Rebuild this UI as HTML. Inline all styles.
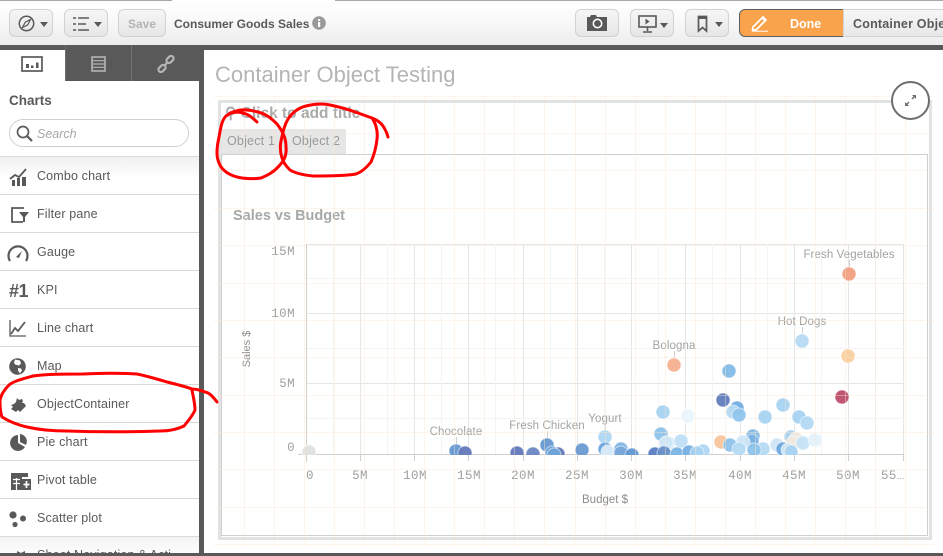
<!DOCTYPE html>
<html><head><meta charset="utf-8"><style>
html,body{margin:0;padding:0;background:#fff}
#p{position:relative;width:943px;height:556px;overflow:hidden;background:#fff;font-family:"Liberation Sans",sans-serif}
#p div,#p span.a{position:absolute;box-sizing:border-box}
.btn{top:9px;height:28px;border:1px solid #d2d2d2;border-radius:6px;background:linear-gradient(#f6f6f6,#e6e6e6)}
.caret{position:absolute;width:0;height:0;border-left:4px solid transparent;border-right:4px solid transparent;border-top:5px solid #595959}
.sep{left:0;width:199px;height:1px;background:#d9d9d9}
.it{left:37px;font-size:12.5px;color:#595959;line-height:14px;white-space:nowrap;letter-spacing:.15px}
.yl,.xl{font-family:"Liberation Mono",monospace;font-size:12.5px;color:#a0a0a0;line-height:14px;white-space:nowrap;letter-spacing:.4px}
.yl{right:648px;text-align:right}
.xl{width:50px;text-align:center;top:469px}
.lb{font-size:11.5px;color:#a3a3a3;line-height:14px;white-space:nowrap;width:120px;text-align:center;letter-spacing:.1px}
svg{position:absolute;overflow:visible}
</style></head><body><div id="p">

<div style="left:0;top:0;width:943px;height:45px;background:linear-gradient(#fff,#fafafa 40%,#ececec)"></div>
<div style="left:0;top:0;width:172px;height:1px;background:#a8a8a8"></div>
<div style="left:335px;top:0;width:608px;height:1px;background:#a8a8a8"></div>

<div class="btn" style="left:9px;width:44px">
<svg style="left:8px;top:5px" width="17" height="17" viewBox="0 0 17 17"><circle cx="8.5" cy="8.5" r="7.2" fill="none" stroke="#595959" stroke-width="1.5"/><path d="M12.5 4.5L9.8 9.8 4.5 12.5 7.2 7.2Z" fill="none" stroke="#595959" stroke-width="1.2"/></svg>
<span class="caret" style="left:30px;top:12px"></span></div>
<div class="btn" style="left:64px;width:44px">
<svg style="left:8px;top:7px" width="17" height="14" viewBox="0 0 17 14"><path d="M0 1h3M5 1h11M0 7h3M5 7h8M0 13h3M5 13h11" stroke="#595959" stroke-width="1.6" fill="none"/></svg>
<span class="caret" style="left:29px;top:12px"></span></div>
<div class="btn" style="left:118px;width:48px;text-align:center;font-size:12px;font-weight:bold;color:#b4b4b4;line-height:28px">Save</div>
<div style="left:174px;top:17px;font-size:12px;font-weight:bold;color:#595959;line-height:15px;white-space:nowrap">Consumer Goods Sales</div>
<svg style="left:312px;top:16px" width="14" height="14" viewBox="0 0 14 14"><circle cx="7" cy="7" r="6.8" fill="#999"/><rect x="6" y="6" width="2.2" height="5" fill="#fff"/><rect x="6" y="3" width="2.2" height="2" fill="#fff"/></svg>

<div class="btn" style="left:575px;width:44px">
<svg style="left:11px;top:4px" width="20" height="17" viewBox="0 0 20 17"><path d="M0 3h3l1-2h5l1 2h10v14H0Z" fill="#595959"/><circle cx="10.500" cy="9.500" r="4.200" fill="none" stroke="#fff" stroke-width="1.600"/></svg></div>
<div class="btn" style="left:630px;width:44px">
<svg style="left:7px;top:5px" width="19" height="18" viewBox="0 0 19 18"><rect x="1" y="1" width="17" height="11" fill="none" stroke="#595959" stroke-width="1.600"/><path d="M7.500 3.500l4 3-4 3Z" fill="#595959"/><path d="M9.500 12v4M5 17h9" stroke="#595959" stroke-width="1.600"/></svg>
<span class="caret" style="left:29px;top:13px"></span></div>
<div class="btn" style="left:685px;width:44px">
<svg style="left:11px;top:5px" width="11" height="17" viewBox="0 0 11 17"><path d="M1.500 16V1.500h8V16L5.500 12.500Z" fill="none" stroke="#595959" stroke-width="1.700"/><path d="M1.500 3h8" stroke="#595959" stroke-width="2"/></svg>
<span class="caret" style="left:29px;top:12px"></span></div>
<div style="left:739px;top:9px;width:105px;height:28px;background:#f9a34c;border:1px solid #5f5f5f;border-radius:6px 0 0 6px;color:#fff;font-weight:bold;font-size:12.500px;line-height:28px;padding-left:50px">Done
<svg style="left:11px;top:5px" width="18" height="17" viewBox="0 0 18 17"><path d="M2 12L12 2l3 3L5 15H1.500Z" fill="none" stroke="#fff" stroke-width="1.700"/><path d="M11 3l3 3" stroke="#fff" stroke-width="1.500"/><path d="M1 16.200h16" stroke="#fff" stroke-width="1"/></svg></div>
<div style="left:843px;top:9px;width:110px;height:28px;background:linear-gradient(#f6f6f6,#e8e8e8);border:1px solid #d2d2d2;font-weight:bold;font-size:12.500px;color:#595959;line-height:28px;padding-left:9px;white-space:nowrap;letter-spacing:.2px">Container Object Testing</div>

<!-- dark chrome -->
<div style="left:0;top:45px;width:943px;height:5px;background:#595959"></div>
<div style="left:65px;top:45px;width:134px;height:36px;background:#595959"></div>
<div style="left:65px;top:45px;width:1px;height:36px;background:#6d6d6d"></div>
<div style="left:131px;top:45px;width:1px;height:36px;background:#747474"></div>
<div style="left:199px;top:45px;width:5px;height:508px;background:#595959"></div>
<div style="left:0;top:553px;width:943px;height:3px;background:#595959"></div>

<!-- tab icons -->
<svg style="left:21px;top:56px" width="22" height="16" viewBox="0 0 22 16"><rect x="1" y="1" width="20" height="14" fill="none" stroke="#595959" stroke-width="1.700"/><path d="M5 12V8h3v4ZM10 12V9.500h2.500V12ZM15 12V6.500h2.500V12Z" fill="#595959"/></svg>
<svg style="left:91px;top:56px" width="15" height="16" viewBox="0 0 15 16"><rect x="1" y="1" width="13" height="14" fill="none" stroke="#b4b4b4" stroke-width="1.600"/><path d="M1 4.700h13M1 8h13M1 11.300h13" stroke="#b4b4b4" stroke-width="1.200"/></svg>
<svg style="left:157px;top:55px" width="18" height="18" viewBox="0 0 18 18"><g fill="none" stroke="#b4b4b4" stroke-width="2.200"><rect x="9" y="2" width="8" height="5" rx="2.500" transform="rotate(-45 13 4.500)"/><rect x="1" y="11" width="8" height="5" rx="2.500" transform="rotate(-45 5 13.500)"/><path d="M7 11l4-4"/></g></svg>

<!-- sidebar -->
<div style="left:9px;top:93px;font-size:13.500px;font-weight:bold;color:#595959;line-height:15px">Charts</div>
<div style="left:9px;top:119px;width:180px;height:28px;border:1px solid #d0d0d0;border-radius:14px;background:#fff"></div>
<svg style="left:16px;top:125px" width="17" height="17" viewBox="0 0 17 17"><circle cx="7" cy="7" r="5.500" fill="none" stroke="#595959" stroke-width="1.700"/><path d="M11 11l5 5" stroke="#595959" stroke-width="2.200"/></svg>
<div style="left:37px;top:127px;font-size:12.500px;font-style:italic;color:#a8a8a8;line-height:14px">Search</div>
<div class="sep" style="top:156px"></div>
<div style="left:0;top:157px;width:199px;height:22px;background:linear-gradient(#f1f1f1,#fff)"></div>
<div class="sep" style="top:194px"></div><div class="sep" style="top:232px"></div><div class="sep" style="top:270px"></div><div class="sep" style="top:308px"></div><div class="sep" style="top:346px"></div><div class="sep" style="top:384px"></div><div class="sep" style="top:422px"></div><div class="sep" style="top:460px"></div><div class="sep" style="top:498px"></div><div class="sep" style="top:536px"></div>
<div style="left:0;top:537px;width:199px;height:16px;background:linear-gradient(#f3f3f3,#fcfcfc)"></div>

<div class="it" style="top:169px">Combo chart</div>
<div class="it" style="top:207px">Filter pane</div>
<div class="it" style="top:245px">Gauge</div>
<div class="it" style="top:283px">KPI</div>
<div class="it" style="top:321px">Line chart</div>
<div class="it" style="top:359px">Map</div>
<div class="it" style="top:397px">ObjectContainer</div>
<div class="it" style="top:435px">Pie chart</div>
<div class="it" style="top:473px">Pivot table</div>
<div class="it" style="top:511px">Scatter plot</div>
<div style="left:0;top:537px;width:199px;height:16px;overflow:hidden"><div class="it" style="top:11px">Sheet Navigation &amp; Acti</div>
<svg style="left:15px;top:12px" width="12" height="12" viewBox="0 0 12 12"><path d="M2 2l4 2 4-2v8H2Z" fill="#595959"/></svg></div>

<svg style="left:9px;top:168px" width="18" height="18" viewBox="0 0 18 18"><path d="M3 12h3v6H3ZM8 10h3v8H8ZM13 9h4v9h-4Z" fill="#595959"/><path d="M1 11l5-4 4 2 7-8" fill="none" stroke="#595959" stroke-width="1.800"/></svg>
<svg style="left:10px;top:206px" width="19" height="17" viewBox="0 0 19 17"><path d="M14 2H2v14h11M14 13v3" fill="none" stroke="#595959" stroke-width="1.800"/><path d="M9 6h10l-4 5v5l-2-1v-4Z" fill="#595959"/></svg>
<svg style="left:7px;top:244px" width="22" height="18" viewBox="0 0 22 18"><path d="M3 17a9.500 9.500 0 1 1 16 0" fill="none" stroke="#595959" stroke-width="2.200"/><path d="M9 13l6-6-3 7Z" fill="#595959"/></svg>
<div style="left:9px;top:281px;font-size:18px;font-weight:bold;color:#595959;line-height:20px;letter-spacing:-.5px">#1</div>
<svg style="left:9px;top:319px" width="18" height="18" viewBox="0 0 18 18"><path d="M1 1v16h16" fill="none" stroke="#595959" stroke-width="1.300"/><path d="M2 15l4-6 3 3 7-9" fill="none" stroke="#595959" stroke-width="1.800"/></svg>
<svg style="left:9px;top:358px" width="17" height="17" viewBox="0 0 17 17"><circle cx="8.500" cy="8.500" r="8.300" fill="#595959"/><path d="M6 1.500l5 1 1 3-2 2-4-1-1-2ZM9 10l3 .5 1 2-2 3-2-3Z" fill="#fff"/></svg>
<svg style="left:10px;top:397px" width="17" height="16" viewBox="0 0 17 16"><path d="M7 1l2 2 3-1 1 2-1 2 2 0 2 3-6 6-2-2-2 2-5-3 2-2-2-2 3-1 2-2Z" fill="#595959"/></svg>
<svg style="left:10px;top:434px" width="17" height="17" viewBox="0 0 17 17"><path d="M8 1A8 8 0 1 0 15 13L8 9Z" fill="#595959"/><path d="M10 0a7.500 7.500 0 0 1 6 11L10 8Z" fill="#595959"/></svg>
<svg style="left:11px;top:473px" width="20" height="17" viewBox="0 0 20 17"><path d="M0 0h17v4h-6v13H0Z" fill="#595959"/><path d="M2 6.500h7M2 10.500h7M5.500 5v12" stroke="#fff" stroke-width="1.200"/><rect x="11" y="6" width="9" height="11" fill="#595959"/><path d="M15.500 8v7M12.500 11.500h6" stroke="#fff" stroke-width="1.700"/></svg>
<svg style="left:9px;top:511px" width="18" height="17" viewBox="0 0 18 17"><circle cx="4" cy="4" r="3.600" fill="#595959"/><circle cx="14" cy="7.500" r="3" fill="#595959"/><circle cx="6" cy="13.500" r="2.600" fill="#595959"/></svg>

<!-- sheet -->
<div style="left:215px;top:62px;font-size:22px;color:#b4b4b4;line-height:26px;white-space:nowrap">Container Object Testing</div>

<!-- container -->
<div style="left:218px;top:100px;width:714px;height:440px;border:3px solid #e2e2e2"></div>
<div style="left:225px;top:105px;font-size:15.500px;font-weight:bold;color:#aaa;line-height:17px;white-space:nowrap">&#9906; Click to add title</div>
<div style="left:221px;top:129px;width:125px;height:25px;background:#e6e6e6"></div>
<div style="left:227px;top:134px;font-size:12.500px;color:#999;line-height:15px;letter-spacing:.2px">Object 1</div>
<div style="left:292px;top:134px;font-size:12.500px;color:#999;line-height:15px;letter-spacing:.2px">Object 2</div>
<div style="left:221px;top:154px;width:707px;height:382px;border:1px solid #cfcfcf"></div>
<div style="left:233px;top:208px;font-size:14.500px;font-weight:bold;color:#a8a8a8;line-height:17px;white-space:nowrap">Sales vs Budget</div>

<!-- chart -->
<svg style="left:0;top:0" width="943" height="556" viewBox="0 0 943 556">
<defs><clipPath id="c"><rect x="300" y="240" width="610" height="215"/></clipPath></defs>
<g stroke="#e6e6e6" stroke-width="1" fill="none">
<path d="M306 244.500H904M306 313.500H904M306 383.500H904"/>
<path d="M360.500 244V455M414.500 244V455M468.500 244V455M523.500 244V455M577.500 244V455M631.500 244V455M685.500 244V455M740.500 244V455M794.500 244V455M848.500 244V455M903.500 244V455"/>
</g>
<g stroke="#f4f4f4" stroke-width="1" fill="none">
<path d="M306 278.500H904M306 348.500H904M306 418.500H904"/>
<path d="M333.500 244V455M387.500 244V455M441.500 244V455M495.500 244V455M550.500 244V455M604.500 244V455M658.500 244V455M712.500 244V455M767.500 244V455M821.500 244V455M875.500 244V455"/>
</g>
<path d="M306.500 244V462M298 454.500H904M360.500 455V461M414.500 455V461M468.500 455V461M523.500 455V461M577.500 455V461M631.500 455V461M685.500 455V461M740.500 455V461M794.500 455V461M848.500 455V461M903.500 455V461" stroke="#cfcfcf" fill="none"/>
<path d="M849.500 260V267M802.500 327V334M674.500 351V358M456.500 437V444M547.500 431V438M605.500 424V430" stroke="#d0d0d0" fill="none"/>
<g clip-path="url(#c)" stroke="#fff" stroke-opacity=".55" stroke-width="1" fill-opacity=".95">
<circle cx="309" cy="452" r="7" fill="#e0e0e0"/>
<circle cx="456" cy="451" r="7" fill="#6698d1"/><circle cx="465" cy="453" r="7" fill="#6378bb"/>
<circle cx="517" cy="453" r="7" fill="#6378bb"/><circle cx="533" cy="454" r="7" fill="#6a86c4"/>
<circle cx="547" cy="445" r="7" fill="#6698d1"/><circle cx="558" cy="454" r="7" fill="#6378bb"/>
<circle cx="552" cy="453" r="7" fill="#6fa3d8"/><circle cx="554" cy="455" r="7" fill="#6fa3d8"/>
<circle cx="582" cy="450" r="7" fill="#6a9bd3"/>
<circle cx="605" cy="437" r="7" fill="#afd6f2"/><circle cx="605" cy="449" r="7" fill="#6ea8de"/><circle cx="608" cy="452" r="7" fill="#d8ebf9"/>
<circle cx="621" cy="449" r="7" fill="#7eb5e3"/><circle cx="621" cy="453" r="7" fill="#79a7d9"/><circle cx="632" cy="455" r="7" fill="#5f97d2"/>
<circle cx="663" cy="412" r="7" fill="#a8d3f1"/><circle cx="661" cy="434" r="7" fill="#8ec3ea"/><circle cx="668" cy="443" r="7" fill="#cfe6f7"/><circle cx="666" cy="443" r="7" fill="#cfe6f7"/>
<circle cx="681" cy="441" r="7" fill="#bfdff5"/><circle cx="688" cy="416" r="7" fill="#eaf4fc"/>
<circle cx="664" cy="452" r="7" fill="#8fb9e2"/><circle cx="655" cy="454" r="7" fill="#5a80c2"/><circle cx="664" cy="453" r="7" fill="#6a90c9"/>
<circle cx="677" cy="454" r="7" fill="#79b3e3"/><circle cx="689" cy="452" r="7" fill="#77afe1"/><circle cx="703" cy="451" r="7" fill="#afd6f2"/><circle cx="697" cy="453" r="7" fill="#a8d3f1"/>
<circle cx="674" cy="365" r="7" fill="#f3b08f"/><circle cx="729" cy="371" r="7" fill="#82bae6"/>
<circle cx="723" cy="400" r="7" fill="#5f7cbd"/><circle cx="737" cy="408" r="7" fill="#72aee0"/><circle cx="733" cy="412" r="7" fill="#b5daf3"/><circle cx="739" cy="415" r="7" fill="#91c5ec"/>
<circle cx="721" cy="442" r="7" fill="#f8c49a"/><circle cx="753" cy="436" r="7" fill="#80b8e5"/><circle cx="752" cy="441" r="7" fill="#7ab3e2"/><circle cx="743" cy="442" r="7" fill="#cfe6f7"/><circle cx="730" cy="445" r="7" fill="#8ec3ea"/><circle cx="739" cy="449" r="7" fill="#b5daf3"/><circle cx="763" cy="449" r="7" fill="#b5daf3"/><circle cx="754" cy="450" r="7" fill="#8ec3ea"/>
<circle cx="765" cy="417" r="7" fill="#a8d3f1"/><circle cx="783" cy="405" r="7" fill="#a8d3f1"/><circle cx="799" cy="417" r="7" fill="#a5d2f1"/><circle cx="807" cy="423" r="7" fill="#b3d9f3"/>
<circle cx="777" cy="445" r="7" fill="#cfe6f7"/><circle cx="791" cy="437" r="7" fill="#a5d2f1"/><circle cx="796" cy="439" r="7" fill="#eee9df"/><circle cx="793" cy="443" r="7" fill="#eee8dd"/><circle cx="803" cy="443" r="7" fill="#c4e2f6"/><circle cx="815" cy="440" r="7" fill="#e3f1fb"/>
<circle cx="783" cy="449" r="7" fill="#6ea8de"/><circle cx="788" cy="450" r="7" fill="#cfe6f7"/><circle cx="791" cy="452" r="7" fill="#a5d2f1"/>
<circle cx="849" cy="274" r="7" fill="#f0a080"/><circle cx="802" cy="341" r="7" fill="#b5daf3"/><circle cx="848" cy="356" r="7" fill="#f9cf9f"/><circle cx="842" cy="397" r="7" fill="#bd4d6b"/>
</g>
</svg>

<div class="lb" style="left:789px;top:248px">Fresh Vegetables</div>
<div class="lb" style="left:742px;top:315px">Hot Dogs</div>
<div class="lb" style="left:614px;top:339px">Bologna</div>
<div class="lb" style="left:396px;top:425px">Chocolate</div>
<div class="lb" style="left:487px;top:419px">Fresh Chicken</div>
<div class="lb" style="left:545px;top:412px">Yogurt</div>

<div class="yl" style="top:245px">15M</div>
<div class="yl" style="top:307px">10M</div>
<div class="yl" style="top:377px">5M</div>
<div class="yl" style="top:441px">0</div>
<div class="xl" style="left:285px">0</div>
<div class="xl" style="left:335px">5M</div>
<div class="xl" style="left:390px">10M</div>
<div class="xl" style="left:444px">15M</div>
<div class="xl" style="left:498px">20M</div>
<div class="xl" style="left:552px">25M</div>
<div class="xl" style="left:606px">30M</div>
<div class="xl" style="left:660px">35M</div>
<div class="xl" style="left:715px">40M</div>
<div class="xl" style="left:769px">45M</div>
<div class="xl" style="left:823px">50M</div>
<div class="xl" style="left:881px;width:auto;text-align:left">55<span style="font-family:'Liberation Sans',sans-serif;font-size:9px;letter-spacing:0">...</span></div>
<div style="left:582px;top:493px;font-size:11.500px;color:#8c8c8c;line-height:14px;white-space:nowrap">Budget $</div>
<div style="left:217px;top:342px;width:60px;text-align:center;font-size:11px;color:#8c8c8c;line-height:14px;transform:rotate(-90deg);white-space:nowrap">Sales $</div>

<!-- snap grid overlay -->
<svg style="left:0;top:0" width="943" height="556" viewBox="0 0 943 556">
<g stroke="#fbe6cf" stroke-opacity=".42" fill="none">
<path d="M214 96.500H935M214 133.500H935M214 170.500H935M214 208.500H935M214 245.500H935M214 283.500H935M214 320.500H935M214 357.500H935M214 395.500H935M214 432.500H935M214 469.500H935M214 507.500H935M214 544.500H935"/>
<path d="M244.500 96V546M274.500 96V546M304.500 96V546M334.500 96V546M364.500 96V546M394.500 96V546M424.500 96V546M454.500 96V546M484.500 96V546M514.500 96V546M544.500 96V546M575.500 96V546M605.500 96V546M635.500 96V546M665.500 96V546M695.500 96V546M725.500 96V546M755.500 96V546M785.500 96V546M815.500 96V546M845.500 96V546M875.500 96V546M905.500 96V546"/>
</g>
</svg>

<!-- expand circle -->
<div style="left:891px;top:81px;width:39px;height:39px;border:2px solid #6e6e6e;border-radius:50%;background:#fff"></div>
<svg style="left:904px;top:94px" width="13" height="13" viewBox="0 0 13 13"><path d="M8 1h4v4L10.500 3.500 8.500 5.500 7.500 4.500 9.500 2.500ZM5 12H1V8l1.500 1.500 2-2 1 1-2 2Z" fill="#6e6e6e"/></svg>

<!-- red annotations -->
<svg style="left:0;top:0" width="943" height="556" viewBox="0 0 943 556">
<g fill="none" stroke="#f00" stroke-width="3" stroke-linecap="round" stroke-linejoin="round">
<path d="M257 122C252 117 248 114 243 113C236 111 230 113 226 116C222 120 221 126 219 137C217 146 216 154 218 160C220 168 226 174 237 177C245 179 255 179 261 178C268 175 274 172 279 166C284 161 287 155 286 147C286 138 283 132 277 124C271 118 266 114 258 112C250 110 242 109 236 111L230 113"/>
<path d="M282 158C280 152 280 146 281 141C283 132 284 126 288 119C292 113 298 108 306 106C314 104 322 103 330 105C340 107 350 110 358 113L372 118C376 124 378 131 377 139C376 149 374 155 371 162C367 167 362 172 356 174C345 176 328 176 313 176C303 175 295 173 290 170C286 166 283 162 282 158Z"/>
<path d="M372 118C377 120 381 123 383 126C385 129 387 133 388 137"/>
<path d="M217 402C213 397 210 393 205 392C200 390 196 389 192 389C184 386 175 384 167 382C157 379 147 376 137 374C120 373 100 373 83 374C65 374 47 374 33 376C22 379 14 381 9 385C4 390 1 395 0 400C0 406 0 412 2 417C10 422 18 425 27 427C40 430 53 431 67 431C95 432 130 432 160 431C170 431 178 429 184 426C189 420 193 415 195 410C195 403 193 396 192 390"/>
</g></svg>

</div></body></html>
